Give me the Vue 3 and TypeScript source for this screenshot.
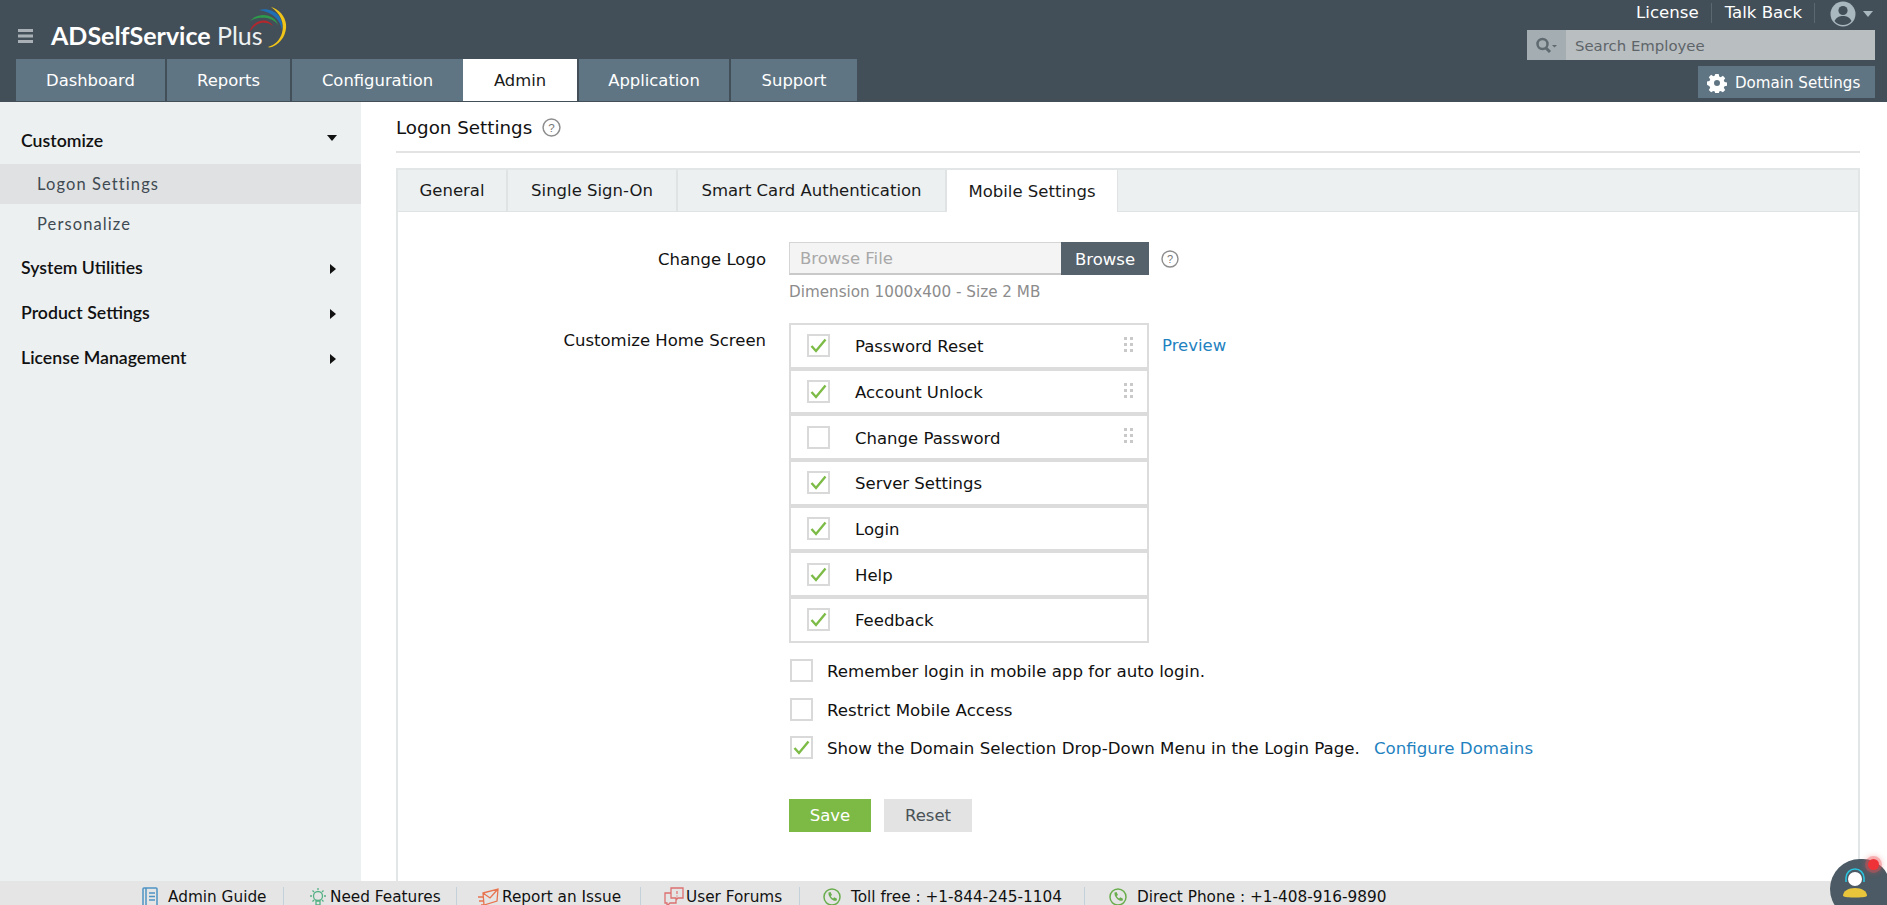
<script setup lang="ts">
const tabs = ['Dashboard', 'Reports', 'Configuration', 'Admin', 'Application', 'Support']
const sub = ['General', 'Single Sign-On', 'Smart Card Authentication', 'Mobile Settings']
const rows = [
  { t: 'Password Reset', c: true, d: true },
  { t: 'Account Unlock', c: true, d: true },
  { t: 'Change Password', c: false, d: true },
  { t: 'Server Settings', c: true, d: false },
  { t: 'Login', c: true, d: false },
  { t: 'Help', c: true, d: false },
  { t: 'Feedback', c: true, d: false },
]
</script>

<template>
  <div class="app">
    <header class="hdr">
      <div class="hdr-left">
        <div class="brand">
          <svg class="burger" width="16" height="14" viewBox="0 0 16 14"><path d="M0 1.5h15M0 7h15M0 12.5h15" stroke="#a9b1b6" stroke-width="3"/></svg>
          <span class="logo"><b>ADSelfService</b> Plus</span>
          <svg class="arcs" width="46" height="44" viewBox="0 0 46 44" fill="none">
            <path d="M2 27C5 17 13 13 20 15c3 1 5 3 6 5-3-3-8-4-12-3-5 1-9 5-12 10z" fill="#b3272d"/>
            <path d="M3 15C9 8 19 7 26 12c3 2 4 4 5 7-3-4-6-6-11-7-6-1-12 0-17 3z" fill="#2e9a4b"/>
            <path d="M12 4c7-2 15 0 20 6 3 4 4 9 3 14-1-5-3-9-6-12-5-5-11-7-17-8z" fill="#1f6fb5"/>
            <path d="M24 1c8 2 14 9 15 17 1 9-4 19-14 23-1 0-3 1-4 0 7-2 12-7 14-14 3-10-2-20-11-26z" fill="#f0c419"/>
          </svg>
        </div>
        <nav class="tabs">
          <a v-for="t in tabs" :key="t" class="tab" :class="{ on: t === 'Admin', ['t-' + t]: true }">{{ t }}</a>
        </nav>
      </div>
      <div class="hdr-right">
        <div class="links">
          <span class="lk">License</span><i class="sep"></i><span class="lk">Talk Back</span><i class="sep"></i>
          <svg class="user" width="26" height="26" viewBox="0 0 26 26"><circle cx="13" cy="13" r="12.5" fill="#a9b7be"/><circle cx="13" cy="9.5" r="4.6" fill="#434f58"/><path d="M4.5 20c2-4 5-5 8.500-5s6.500 1 8.500 5c-2 2.500-5 4-8.500 4s-6.500-1.500-8.500-4z" fill="#434f58"/></svg>
          <i class="caret"></i>
        </div>
        <div class="search">
          <span class="s-ico">
            <svg width="24" height="18" viewBox="0 0 24 18" fill="none"><circle cx="7.500" cy="8" r="5" stroke="#5f6a70" stroke-width="2.500"/><path d="M11 12l4 4" stroke="#5f6a70" stroke-width="3"/><path d="M17 9h5l-2.500 2.500z" fill="#5f6a70"/></svg>
          </span>
          <span class="s-txt">Search Employee</span>
        </div>
        <button class="domain">
          <svg width="20" height="20" viewBox="0 0 20 20"><path fill="#fff" fill-rule="evenodd" d="M8.300 1h3.400l.5 2.500 1.500.7 2.200-1.400 2.300 2.400-1.400 2.100.7 1.600 2.500.5v3.300l-2.500.5-.7 1.600 1.400 2.100-2.300 2.400-2.200-1.400-1.500.7-.5 2.400H8.300l-.5-2.400-1.500-.7-2.200 1.400-2.300-2.400 1.400-2.100-.7-1.600L0 11.700V8.400l2.500-.5.7-1.600-1.400-2.100 2.300-2.400 2.200 1.400 1.500-.7zM10 7a3 3 0 100 6 3 3 0 000-6z"/></svg>
          Domain Settings
        </button>
      </div>
    </header>

    <div class="body">
      <aside class="side">
        <div class="m-h first"><span>Customize</span><i class="down"></i></div>
        <div class="m-s on">Logon Settings</div>
        <div class="m-s">Personalize</div>
        <div class="m-h"><span>System Utilities</span><i class="right"></i></div>
        <div class="m-h"><span>Product Settings</span><i class="right"></i></div>
        <div class="m-h"><span>License Management</span><i class="right"></i></div>
      </aside>

      <main class="main">
        <div class="title">
          <h1>Logon Settings</h1>
          <svg class="help" width="19" height="19" viewBox="0 0 18 18" fill="none"><circle cx="9" cy="9" r="8" stroke="#8d8d8d" stroke-width="1.400"/><text x="9" y="13" text-anchor="middle" font-size="11" font-family="Liberation Sans, sans-serif" fill="#777">?</text></svg>
        </div>
        <section class="box">
          <div class="subtabs">
            <a v-for="s in sub" :key="s" class="st" :class="{ on: s === 'Mobile Settings' }">{{ s }}</a>
          </div>
          <div class="form">
            <div class="f-row">
              <label class="lbl l1">Change Logo</label>
              <div class="val">
                <div class="file">
                  <span class="f-in">Browse File</span><span class="f-btn">Browse</span>
                  <svg class="help h2" width="18" height="18" viewBox="0 0 18 18" fill="none"><circle cx="9" cy="9" r="8" stroke="#8d8d8d" stroke-width="1.400"/><text x="9" y="13" text-anchor="middle" font-size="11" font-family="Liberation Sans, sans-serif" fill="#777">?</text></svg>
                </div>
                <div class="dim">Dimension 1000x400 - Size 2 MB</div>
              </div>
            </div>
            <div class="f-row r2">
              <label class="lbl l2">Customize Home Screen</label>
              <div class="val">
                <div class="list-wrap">
                  <ul class="list">
                    <li v-for="r in rows" :key="r.t" class="row">
                      <span class="cb" :class="{ c: r.c }">
                        <svg v-if="r.c" width="19" height="19" viewBox="0 0 19 19" fill="none"><path d="M2.500 10l4.500 5L16.500 3.500" stroke="#7dbb47" stroke-width="2.400"/></svg>
                      </span>
                      <span class="r-t">{{ r.t }}</span>
                      <svg v-if="r.d" class="drag" width="9" height="15" viewBox="0 0 9 15" fill="#c9c9c9"><rect x="0" y="0" width="3" height="3"/><rect x="6" y="0" width="3" height="3"/><rect x="0" y="6" width="3" height="3"/><rect x="6" y="6" width="3" height="3"/><rect x="0" y="12" width="3" height="3"/><rect x="6" y="12" width="3" height="3"/></svg>
                    </li>
                  </ul>
                  <a class="link pv">Preview</a>
                </div>
                <div class="opt o1">
                  <span class="cb"></span><span class="o-t">Remember login in mobile app for auto login.</span>
                </div>
                <div class="opt o2">
                  <span class="cb"></span><span class="o-t">Restrict Mobile Access</span>
                </div>
                <div class="opt o3">
                  <span class="cb c"><svg width="19" height="19" viewBox="0 0 19 19" fill="none"><path d="M2.500 10l4.500 5L16.500 3.500" stroke="#7dbb47" stroke-width="2.400"/></svg></span>
                  <span class="o-t">Show the Domain Selection Drop-Down Menu in the Login Page.</span>
                  <a class="link cfg o-t">Configure Domains</a>
                </div>
                <div class="btns">
                  <button class="save">Save</button>
                  <button class="reset">Reset</button>
                </div>
              </div>
            </div>
          </div>
        </section>
      </main>
    </div>

    <footer class="foot">
      <span class="fi a">
        <svg width="16" height="20" viewBox="0 0 16 20" fill="none" stroke="#4d93c4" stroke-width="1.500"><rect x="1" y="1" width="14" height="18" rx="1"/><path d="M4 1v18M7 6h6M7 9.500h6M7 13h6"/></svg>
        <span class="ft">Admin Guide</span>
      </span>
      <span class="fi b">
        <svg width="18" height="20" viewBox="0 0 18 20" fill="none" stroke="#55b184" stroke-width="1.300"><circle cx="9" cy="9" r="4.500"/><path d="M7 14h4v4H7zM9 1v2M1 9h2M15 9h2M3.500 3.500L5 5M14.500 3.500L13 5M3.500 14.500L5 13M14.500 14.500L13 13"/></svg>
        <span class="ft">Need Features</span>
      </span>
      <span class="fi c2">
        <svg width="21" height="19" viewBox="0 0 21 19" fill="none" stroke="#e8734f" stroke-width="1.300"><path d="M5 5l15-4-1 12-13 4zM5 5l7 5 8-9M0 9h5M1 13h5M3 17h4"/></svg>
        <span class="ft">Report an Issue</span>
      </span>
      <span class="fi d">
        <svg width="20" height="20" viewBox="0 0 20 20" fill="none" stroke="#dd6f6f" stroke-width="1.300"><path d="M7 1h12v10h-5l-2 2v-2H7zM7 6H1v10h2v3l3-3h6v-3"/><path d="M13 4v3M13 8.500v1" stroke-width="1.200"/></svg>
        <span class="ft">User Forums</span>
      </span>
      <span class="fi e">
        <svg width="18" height="18" viewBox="0 0 18 18" fill="none"><circle cx="9" cy="9" r="8" stroke="#69ad4d" stroke-width="1.500"/><path d="M5.500 4.500l2-.5 1.500 3-1.300 1c.5 1.200 1.300 2 2.500 2.500l1-1.300 2.800 1.500-.5 2c-4 1-8.500-4-8-8.200z" fill="#69ad4d"/></svg>
        <span class="ft">Toll free : +1-844-245-1104</span>
      </span>
      <span class="fi f">
        <svg width="18" height="18" viewBox="0 0 18 18" fill="none"><circle cx="9" cy="9" r="8" stroke="#69ad4d" stroke-width="1.500"/><path d="M5.500 4.500l2-.5 1.500 3-1.300 1c.5 1.200 1.300 2 2.500 2.500l1-1.300 2.800 1.500-.5 2c-4 1-8.500-4-8-8.200z" fill="#69ad4d"/></svg>
        <span class="ft">Direct Phone : +1-408-916-9890</span>
      </span>
    </footer>

    <div class="bot">
      <svg width="30" height="32" viewBox="0 0 30 32" fill="none">
        <circle cx="15" cy="12" r="7" fill="#fff"/>
        <path d="M6 15V11a9 9 0 0118 0v4" stroke="#2bc4de" stroke-width="1.600"/>
        <path d="M3 29c0-5 5-8 12-8s12 3 12 8c-2 2-22 2-24 0z" fill="#e9c53c"/>
      </svg>
      <i class="dot"></i>
    </div>
  </div>
</template>

<style>
html, body { margin: 0; padding: 0; background: #fff; overflow: hidden; }
</style>

<style scoped>
.app { height: 905px; display: flex; flex-direction: column; overflow: hidden; position: relative; font-family: "DejaVu Sans", sans-serif; font-size: 16.5px; color: #1a1a1a; }
.hdr { height: 102px; flex: none; background: #434f58; display: flex; justify-content: space-between; box-sizing: border-box; padding: 0 12px 0 16px; }
.hdr-left { display: flex; flex-direction: column; }
.brand { height: 59px; display: flex; align-items: center; position: relative; }
.burger { margin-left: 2px; margin-top: 13px; }
.logo { margin-left: 17px; margin-top: 11px; font-family: Lato, sans-serif; font-size: 25px; color: #eef1f2; font-weight: 400; }
.logo b { font-weight: 700; color: #fff; }
.arcs { position: absolute; left: 231px; top: 6px; }
.tabs { display: flex; gap: 2px; height: 42px; }
.tab { background: #607583; color: #fff; display: flex; align-items: center; justify-content: center; font-size: 16.4px; box-sizing: border-box; }
.tab.on { background: #fff; color: #1a1a1a; margin-left: -2px; }
.t-Dashboard { width: 149px; }
.t-Reports { width: 123px; }
.t-Configuration { width: 171px; }
.t-Admin { width: 114px; }
.t-Application { width: 150px; }
.t-Support { width: 126px; }
.hdr-right { width: 348px; display: flex; flex-direction: column; align-items: flex-end; }
.links { height: 30px; display: flex; align-items: center; color: #fff; font-size: 16.6px; padding-bottom: 5px; box-sizing: border-box; padding-right: 2px; }
.sep { width: 1px; height: 20px; background: #5c6870; margin: 0 13px 0 12px; }
.user { margin: 3px 7px 0 2px; }
.caret { width: 0; height: 0; border-left: 5.500px solid transparent; border-right: 5.500px solid transparent; border-top: 6px solid #a9b7be; margin-top: 3px; }
.search { width: 348px; height: 30px; background: #b9bec1; display: flex; align-items: center; flex: none; }
.s-ico { width: 39px; height: 30px; background: #a3adb2; display: flex; align-items: center; justify-content: center; }
.s-txt { margin-left: 9px; color: #5e6569; font-size: 14.9px; padding-top: 1px; }
.domain { margin-top: 6px; width: 177px; height: 32px; background: #607583; border: 0; color: #fff; font: inherit; font-size: 15.1px; display: flex; align-items: center; gap: 8px; padding: 1px 0 0 9px; white-space: nowrap; }
.body { flex: 1; min-height: 0; display: flex; }
.side { width: 361px; flex: none; background: #ecf0f1; font-family: Lato, sans-serif; }
.m-h { height: 45px; display: flex; align-items: center; justify-content: space-between; padding: 0 25px 0 21px; font-size: 17.7px; font-weight: 600; color: #111; }
.m-h.first { box-sizing: border-box; height: 62px; align-items: flex-start; padding-top: 28px; }
.m-s { height: 40px; display: flex; align-items: center; padding-left: 37px; font-size: 16.5px; color: #3f4a52; letter-spacing: 1.1px; }
.m-s.on { background: #e0e1e3; }
.m-s + .m-h { margin-top: 1px; }
.down { width: 0; height: 0; border-left: 5px solid transparent; border-right: 5px solid transparent; border-top: 6px solid #111; margin-top: 5px; margin-right: -1px; }
.right { width: 0; height: 0; border-top: 5px solid transparent; border-bottom: 5px solid transparent; border-left: 6px solid #111; margin-top: 2px; }
.main { flex: 1; min-width: 0; padding: 0 27px 0 35px; display: flex; flex-direction: column; }
.title { height: 49px; flex: none; display: flex; align-items: center; border-bottom: 2px solid #e3e3e3; gap: 10px; }
.title h1 { margin: 2px 0 0; font-size: 18.3px; font-weight: 400; color: #111; }
.title .help { margin-top: 2px; }
.box { margin-top: 15px; flex: 1; border: 2px solid #e3e6e7; border-bottom: 0; min-height: 0; box-sizing: border-box; }
.subtabs { height: 41px; background: #ecf0f1; display: flex; border-bottom: 1px solid #dfe3e4; }
.st { display: flex; align-items: center; justify-content: center; border-right: 2px solid #e0e3e4; font-size: 16.5px; color: #1a1a1a; box-sizing: border-box; }
.st:nth-child(1) { width: 110px; }
.st:nth-child(2) { width: 170px; }
.st:nth-child(3) { width: 269px; }
.st:nth-child(4) { width: 171px; background: #fff; height: 42px; border-right: 1px solid #dfe3e4; }
.form { padding-top: 30px; }
.f-row { display: flex; }
.lbl { width: 368px; flex: none; text-align: right; color: #111; }
.l1 { line-height: 35px; }
.l2 { padding-top: 6px; line-height: 24px; }
.val { margin-left: 23px; }
.file { display: flex; align-items: stretch; height: 33px; position: relative; width: 360px; }
.f-in { width: 272px; background: #f4f4f4; border: 1px solid #d5d5d5; border-bottom: 2px solid #c9c9c9; border-right: 0; box-sizing: border-box; color: #a8a8a8; padding-left: 10px; line-height: 32px; }
.f-btn { width: 88px; background: #55626b; color: #fff; display: flex; align-items: center; justify-content: center; padding-top: 1px; }
.h2 { position: absolute; left: 372px; top: 8px; }
.dim { margin-top: 7px; height: 42px; color: #8c8c8c; font-size: 15.2px; line-height: 20px; }
.r2 { margin-top: -1px; }
.list-wrap { display: flex; align-items: flex-start; }
.list { list-style: none; margin: 0; padding: 0; width: 360px; }
.row { height: 45.670px; border: 2px solid #dcdcdc; box-sizing: border-box; display: flex; align-items: center; padding-left: 16px; position: relative; background: #fff; }
.r-t { margin-left: 25px; color: #111; padding-top: 2px; }
.drag { position: absolute; right: 14px; top: 12px; }
.cb { width: 23px; height: 23px; flex: none; border: 2px solid #d9d9d9; box-sizing: border-box; background: #fff; display: flex; align-items: center; justify-content: center; }
.pv { margin-left: 13px; margin-top: 13px; }
.link { color: #1f82c0; }
.opt { display: flex; align-items: center; height: 23px; margin-left: 1px; color: #111; white-space: nowrap; font-size: 16.65px; }
.o-t { padding-top: 2px; }
.opt .cb { margin-right: 14px; }
.o1 { margin-top: 16px; }
.o2 { margin-top: 16px; }
.o3 { margin-top: 15px; }
.cfg { margin-left: 14px; }
.btns { display: flex; gap: 13px; margin-top: 40px; }
.btns button { height: 33px; border: 0; font: inherit; padding: 1px 0 0; }
.save { width: 82px; background: #7dba45; color: #fff; }
.reset { width: 88px; background: #e3e3e3; color: #4a5257; }
.foot { height: 24px; flex: none; background: #e5e5e5; display: flex; align-items: flex-start; position: relative; font-size: 15.3px; overflow: hidden; padding-left: 142px; box-sizing: border-box; }
.fi { display: flex; align-items: center; position: relative; height: 25px; flex: none; padding-top: 7px; box-sizing: border-box; color: #111; white-space: nowrap; }
.fi svg { flex: none; }
.fi::after { content: ""; position: absolute; top: 6px; bottom: 0; width: 1px; background: #c3d2da; right: 0; }
.a .ft { margin-left: 10px; }
.fi.a { width: 142px; }
.fi.b { width: 173px; padding-left: 25px; }
.b .ft { margin-left: 3px; }
.fi.c2 { width: 184px; padding-left: 21px; }
.c2 .ft { margin-left: 3px; }
.fi.d { width: 159px; padding-left: 23px; }
.d .ft { margin-left: 2px; }
.fi.e { width: 285px; padding-left: 23px; }
.e .ft { margin-left: 10px; }
.fi.f { padding-left: 24px; }
.f .ft { margin-left: 10px; }
.f::after { display: none; }
.bot { position: absolute; left: 1830px; top: 859px; width: 60px; height: 60px; border-radius: 50% 45% 0 50%; background: #4b5a64; display: flex; justify-content: center; padding: 8px 10px 0 0; box-sizing: border-box; }
.dot { position: absolute; left: 38px; top: 0; width: 11px; height: 11px; border-radius: 50%; background: #ee3237; box-shadow: 0 0 0 3px rgba(238,80,85,.35), 0 0 5px 4px rgba(238,80,85,.25); }
</style>
